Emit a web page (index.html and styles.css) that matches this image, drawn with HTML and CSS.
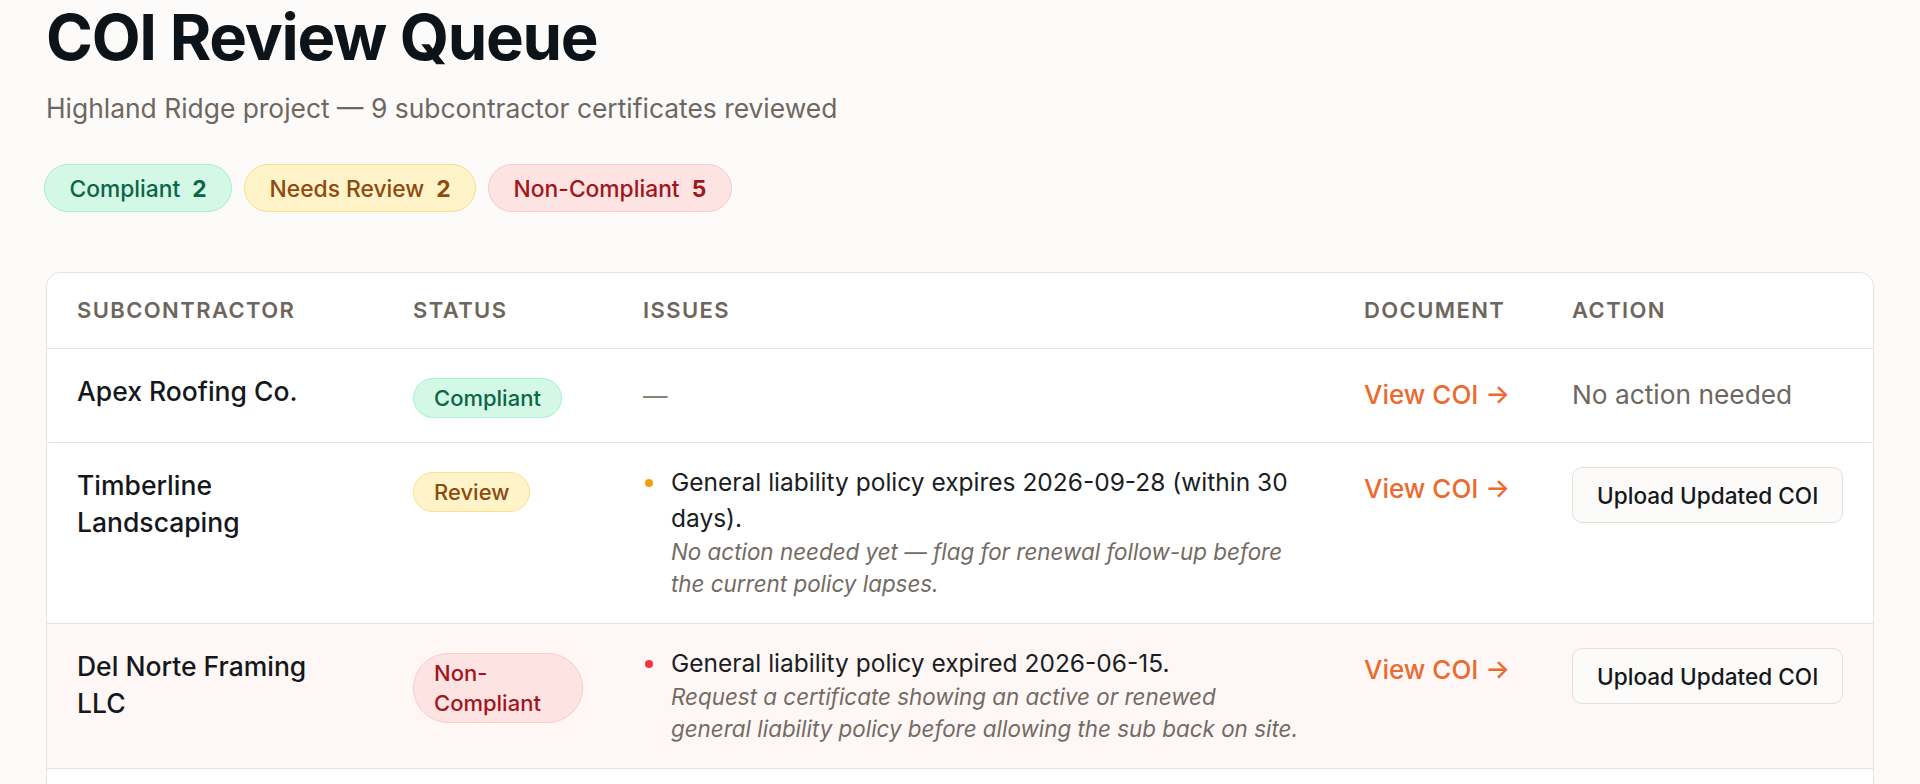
FILE: index.html
```html
<!DOCTYPE html>
<html lang="en">
<head>
<meta charset="utf-8">
<title>COI Review Queue</title>
<link rel="stylesheet" href="styles.css">
</head>
<body>
<main class="page">
  <h1 class="title">COI Review Queue</h1>
  <p class="subtitle">Highland Ridge project — 9 subcontractor certificates reviewed</p>
  <div class="chips">
    <span class="chip chip-ok">Compliant <b class="count">2</b></span>
    <span class="chip chip-warn">Needs Review <b class="count">2</b></span>
    <span class="chip chip-bad">Non-Compliant <b class="count">5</b></span>
  </div>
  <div class="card">
    <table class="queue">
      <colgroup>
        <col class="c-sub"><col class="c-status"><col class="c-issues"><col class="c-doc"><col class="c-action">
      </colgroup>
      <thead>
        <tr>
          <th>Subcontractor</th>
          <th>Status</th>
          <th>Issues</th>
          <th>Document</th>
          <th>Action</th>
        </tr>
      </thead>
      <tbody>
        <tr>
          <td class="name">Apex Roofing Co.</td>
          <td><span class="badge badge-ok">Compliant</span></td>
          <td><span class="none">—</span></td>
          <td><a class="view" href="#">View COI →</a></td>
          <td><span class="muted">No action needed</span></td>
        </tr>
        <tr>
          <td class="name">Timberline Landscaping</td>
          <td><span class="badge badge-warn">Review</span></td>
          <td>
            <div class="issue issue-warn">
              <p class="issue-text">General liability policy expires 2026-09-28 (within 30 days).</p>
              <p class="issue-note">No action needed yet — flag for renewal follow-up before<br>the current policy lapses.</p>
            </div>
          </td>
          <td><a class="view" href="#">View COI →</a></td>
          <td><button class="btn" type="button">Upload Updated COI</button></td>
        </tr>
        <tr class="row-bad">
          <td class="name">Del Norte Framing LLC</td>
          <td><span class="badge badge-bad">Non-Compliant</span></td>
          <td>
            <div class="issue issue-bad">
              <p class="issue-text">General liability policy expired 2026-06-15.</p>
              <p class="issue-note">Request a certificate showing an active or renewed<br>general liability policy before allowing the sub back on site.</p>
            </div>
          </td>
          <td><a class="view" href="#">View COI →</a></td>
          <td><button class="btn" type="button">Upload Updated COI</button></td>
        </tr>
        <tr>
          <td class="name">Summit Electric Inc.</td>
          <td><span class="badge badge-ok">Compliant</span></td>
          <td><span class="none">—</span></td>
          <td><a class="view" href="#">View COI →</a></td>
          <td><span class="muted">No action needed</span></td>
        </tr>
        <tr>
          <td class="name">Cascade Plumbing</td>
          <td><span class="badge badge-warn">Review</span></td>
          <td>
            <div class="issue issue-warn">
              <p class="issue-text">Additional insured endorsement not attached.</p>
              <p class="issue-note">Confirm the endorsement names the GC and owner.</p>
            </div>
          </td>
          <td><a class="view" href="#">View COI →</a></td>
          <td><button class="btn" type="button">Upload Updated COI</button></td>
        </tr>
      </tbody>
    </table>
  </div>
</main>
</body>
</html>
```

FILE: styles.css
```css
* { box-sizing: border-box; }

html, body {
  margin: 0;
  padding: 0;
  background: #fcfbf9;
}

body {
  font-family: "Inter", "Noto Sans", sans-serif;
  color: #15191e;
}

.page {
  padding: 2px 46px 0;
}

.title {
  margin: 0;
  font-size: 63.5px;
  line-height: 70px;
  font-weight: 700;
  letter-spacing: -0.02em;
  color: #0d1419;
}

.subtitle {
  margin: 19px 0 0;
  font-size: 26.4px;
  line-height: 34px;
  color: #6f675f;
}

.chips {
  display: flex;
  gap: 12px;
  margin: 39px 0 0 -2px;
}

.chip {
  display: inline-flex;
  align-items: center;
  gap: 12px;
  padding: 7.5px 24.5px;
  border: 1px solid transparent;
  border-radius: 999px;
  font-size: 22.8px;
  line-height: 31px;
  font-weight: 500;
}

.chip .count { font-weight: 700; }

.chip-ok { background: #d3f8e6; border-color: #a8efcd; color: #0b6648; }
.chip-warn { background: #fef3c9; border-color: #fbe08c; color: #8f4a0f; }
.chip-bad { background: #fee3e3; border-color: #fbc9c9; color: #a1161d; }

.card {
  margin-top: 60px;
  background: #ffffff;
  border: 1px solid #e6e2dd;
  border-radius: 14px;
  overflow: hidden;
}

.queue {
  width: 100%;
  border-collapse: collapse;
  table-layout: fixed;
}

.c-sub { width: 336px; }
.c-status { width: 230px; }
.c-issues { width: 721px; }
.c-doc { width: 208px; }
.c-action { width: 331px; }

.queue th {
  text-align: left;
  padding: 24px 30px;
  font-size: 22px;
  line-height: 27px;
  font-weight: 600;
  letter-spacing: 1.4px;
  text-transform: uppercase;
  color: #6e655c;
  border-bottom: 1px solid #e8e5e1;
}

.queue td {
  vertical-align: top;
  padding: 24px 30px;
  border-bottom: 1px solid #e8e5e1;
  font-size: 24.5px;
  line-height: 36px;
}

.row-bad td { background: #fef7f6; }

.name {
  font-size: 26.5px !important;
  line-height: 36.5px !important;
  font-weight: 500;
  color: #14181c;
}

.badge {
  display: inline-block;
  margin-top: 5px;
  padding: 4px 20px;
  border: 1px solid transparent;
  border-radius: 999px;
  font-size: 22px;
  line-height: 30px;
  font-weight: 500;
}

.badge-ok { background: #d3f8e6; border-color: #a8efcd; color: #0b6648; }
.badge-warn { background: #fef3c9; border-color: #fbe08c; color: #8f4a0f; }
.badge-bad { background: #fee3e3; border-color: #fbc9c9; color: #a1161d; }

.none {
  display: inline-block;
  padding-top: 5px;
  color: #8a8279;
}

.issue {
  position: relative;
  margin-top: -3px;
  padding-left: 28px;
}

.issue::before {
  content: "";
  position: absolute;
  left: 2px;
  top: 15px;
  width: 8px;
  height: 8px;
  border-radius: 50%;
}

.issue-warn::before { background: #f59e0b; }
.issue-bad::before { background: #ef3340; }

.issue-text {
  margin: 0;
  max-width: 622px;
  color: #1a1e23;
}

.issue-note {
  margin: 0;
  white-space: nowrap;
  font-size: 22.4px;
  line-height: 31.5px;
  font-style: italic;
  color: #736b63;
}

.view {
  display: inline-block;
  padding-top: 4px;
  font-size: 26px;
  font-weight: 500;
  color: #ec6a2e;
  text-decoration: none;
}

.muted {
  display: inline-block;
  padding-top: 4px;
  font-size: 26.3px;
  color: #6f675f;
}

.btn {
  display: inline-block;
  height: 56px;
  padding: 0 24px;
  border: 1px solid #e3dfda;
  border-radius: 10px;
  background: #fcfbf9;
  font-family: inherit;
  font-size: 22.6px;
  font-weight: 500;
  white-space: nowrap;
  color: #14181c;
  cursor: pointer;
}
```
